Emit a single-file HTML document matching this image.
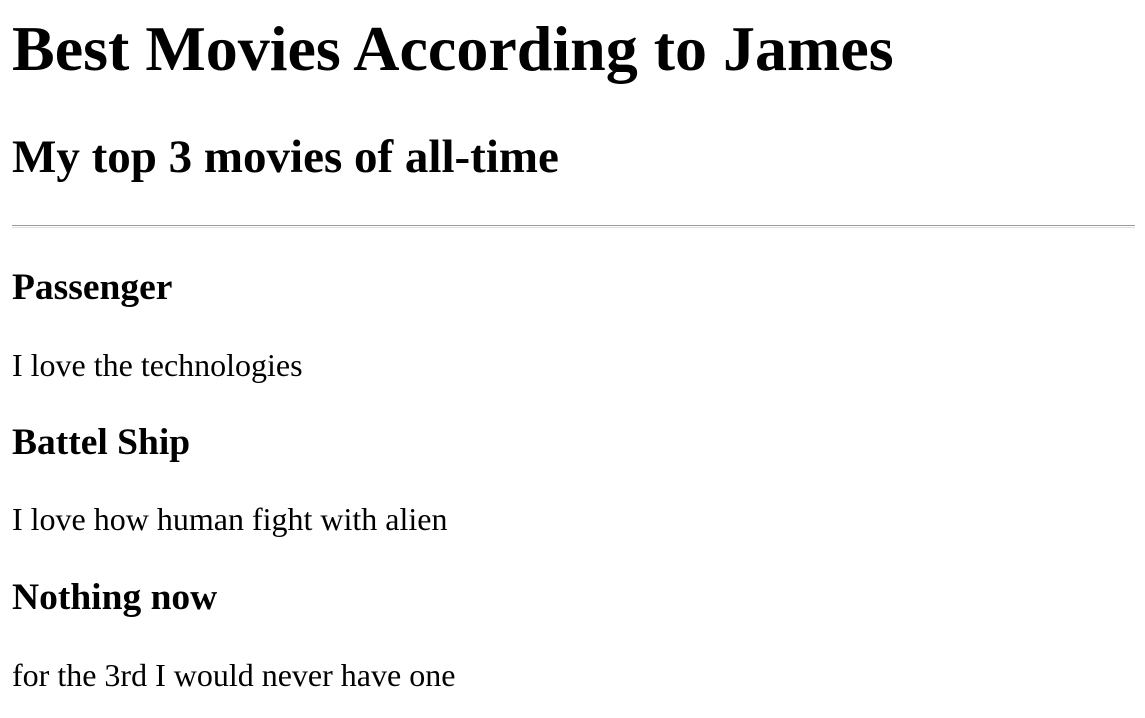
<!DOCTYPE html>
<html><head><meta charset="utf-8"><style>
html,body{margin:0;padding:0;background:#fff;width:1145px;height:718px;overflow:hidden}
body{font-family:"Liberation Serif",serif;color:#000;position:relative}
.t{position:absolute;left:12px;margin:0;white-space:nowrap}
.h1{font-size:64px;line-height:64px;font-weight:bold}
.h2{font-size:47px;line-height:47px;font-weight:bold}
.h3{font-size:37.5px;line-height:37.5px;font-weight:bold}
.p{font-size:32px;line-height:32px}
.hr{position:absolute;left:12px;width:1123px;top:225px;height:1px;border-top:1px solid #9a9a9a;border-bottom:1px solid #e0e0e0}
</style></head><body>
<div class="t h1" style="top:17px">Best Movies According to James</div>
<div class="t h2" style="top:134px">My top 3 movies of all-time</div>
<div class="hr"></div>
<div class="t h3" style="top:269px">Passenger</div>
<div class="t p" style="top:349px">I love the technologies</div>
<div class="t h3" style="top:424px">Battel Ship</div>
<div class="t p" style="top:503px">I love how human fight with alien</div>
<div class="t h3" style="top:579px">Nothing now</div>
<div class="t p" style="top:659px">for the 3rd I would never have one</div>
</body></html>
